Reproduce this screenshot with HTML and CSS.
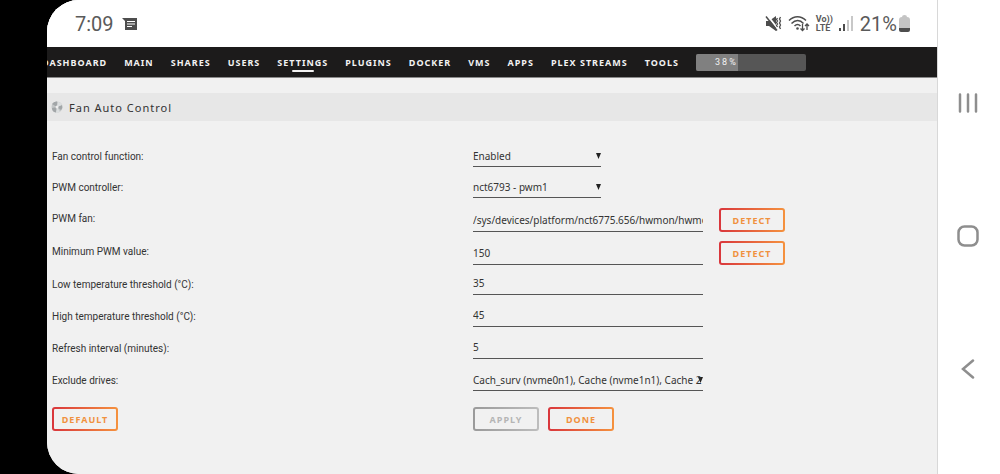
FILE: index.html
```
<!DOCTYPE html>
<html lang="en">
  <head>
    <meta charset="UTF-8" />
    <meta name="viewport" content="width=device-width, initial-scale=1.0" />
    <title>Fan Auto Control</title>
    <link rel="stylesheet" href="styles.css">
  </head>
  <body>
    <div class="screen">
      <div class="page">
        <header class="status">
          <span>7:09</span>
          <svg class="msg" width="16" height="14" viewBox="0 0 16 14">
            <path d="M0 1h15v12H3V4z" fill="#4d4d4d" />
            <path d="M5 4.500h8M5 7h8M5 9.500h5" stroke="#fff" stroke-width="1.200" />
          </svg>
          <div class="status-right">
            <svg width="17" height="17" viewBox="0 0 17 17" fill="none" stroke="#4d4d4d">
              <path d="M1 6h3l7-5v15l-7-5H1z" fill="#4d4d4d" stroke="none" />
              <path d="M2 0l11 14" stroke="#fff" stroke-width="2" />
              <path d="M1 1.500l11 14" stroke-width="1.500" />
              <path d="M12.500 3l-1 1.500 1 1.500-1 1.500 1 1.500-1 1.500 1 1.500M15.500 2l-1 2 1 2-1 2 1 2-1 2 1 2" stroke-width="1.300" />
            </svg>
            <svg width="22" height="17" viewBox="0 0 22 17" fill="none" stroke="#4d4d4d" stroke-width="1.500">
              <path d="M1 5.500c5-5 12-5 17 0M3.500 8.500c4-4 8.500-4 12 0M6.500 11c2-2 4-2 6 0" />
              <circle cx="9.500" cy="13.500" r="1.300" fill="#4d4d4d" stroke="none" />
              <path d="M14.500 9v6.500M12.500 13.500l2 2 2-2M19 15V9M17 11l2-2 2 2" stroke-width="1.300" />
            </svg>
            <span class="volte"><span>Vo))</span><span>LTE</span></span>
            <svg width="15" height="15" viewBox="0 0 15 15">
              <path d="M0 12h2v3H0zM4 8h2v7H4z" fill="#4d4d4d" />
              <path d="M8 4h2v11H8zM12 0h2v15h-2z" fill="#c8c8c8" />
            </svg>
            <span class="percent">21%</span>
            <svg class="battery" width="11" height="17" viewBox="0 0 11 17">
              <path d="M3 2q0-2 2.500-2t2.500 2q3 0 3 3v8H0V5q0-3 3-3z" fill="#c4c4c4" />
              <path d="M0 13h11v2q0 2-2 2H2q-2 0-2-2z" fill="#4d4d4d" />
            </svg>
          </div>
        </header>

        <nav class="menu">
          <a href="#">DASHBOARD</a>
          <a href="#">MAIN</a>
          <a href="#">SHARES</a>
          <a href="#">USERS</a>
          <a href="#" class="active">SETTINGS</a>
          <a href="#">PLUGINS</a>
          <a href="#">DOCKER</a>
          <a href="#">VMS</a>
          <a href="#">APPS</a>
          <a href="#">PLEX STREAMS</a>
          <a href="#">TOOLS</a>
          <div class="usage"><div class="usage-bar" style="width: 38%">38%</div></div>
        </nav>

        <h1 class="title">
          <svg width="12" height="12" viewBox="0 0 12 12">
            <circle cx="6" cy="6" r="5.500" fill="#c3c6c7" />
            <path d="M6 6L1 3q2-3 5-2.500zM6 6l5-2q1 3-1 5zM6 6l-1 5.500Q1 11 1 7z" fill="#a2a6a8" />
            <path d="M6 6l1-5q3 0 4 3zM6 6l3 4.500q-2 1.500-4 1z" fill="#dcdfe0" />
            <circle cx="6" cy="6" r="1.500" fill="#eee" />
          </svg>
          Fan Auto Control
        </h1>

        <form class="settings">
          <div class="row short">
            <label for="service">Fan control function:</label>
            <div class="field">
              <select id="service" class="narrow"><option>Enabled</option><option>Disabled</option></select>
            </div>
          </div>
          <div class="row short">
            <label for="controller">PWM controller:</label>
            <div class="field">
              <select id="controller" class="narrow"><option>nct6793 - pwm1</option></select>
            </div>
          </div>
          <div class="row tall">
            <label for="fan">PWM fan:</label>
            <div class="field">
              <input type="text" id="fan" value="/sys/devices/platform/nct6775.656/hwmon/hwmon3/fan1_input">
              <button type="button">DETECT</button>
            </div>
          </div>
          <div class="row tall">
            <label for="pwm">Minimum PWM value:</label>
            <div class="field">
              <input type="text" id="pwm" value="150">
              <button type="button">DETECT</button>
            </div>
          </div>
          <div class="row">
            <label for="low">Low temperature threshold (°C):</label>
            <div class="field"><input type="text" id="low" value="35"></div>
          </div>
          <div class="row">
            <label for="high">High temperature threshold (°C):</label>
            <div class="field"><input type="text" id="high" value="45"></div>
          </div>
          <div class="row">
            <label for="interval">Refresh interval (minutes):</label>
            <div class="field"><input type="text" id="interval" value="5"></div>
          </div>
          <div class="row">
            <label for="exclude">Exclude drives:</label>
            <div class="field">
              <select id="exclude"><option>Cach_surv (nvme0n1), Cache (nvme1n1), Cache 2</option></select>
            </div>
          </div>
          <div class="row actions">
            <div><button type="button">DEFAULT</button></div>
            <div class="buttons">
              <button type="submit" disabled>APPLY</button>
              <button type="button">DONE</button>
            </div>
          </div>
        </form>
      </div>

      <div class="phone-nav">
        <button type="button" class="key" aria-label="Recents">
          <svg width="20" height="20" viewBox="0 0 20 20" stroke="#8e8e8e" stroke-width="2.500" stroke-linecap="round">
            <path d="M2 1.500v17M10 1.500v17M18 1.500v17" />
          </svg>
        </button>
        <button type="button" class="key" aria-label="Home">
          <svg width="22" height="22" viewBox="0 0 22 22" fill="none" stroke="#8e8e8e" stroke-width="2.500">
            <rect x="1.500" y="1.500" width="19" height="19" rx="6" />
          </svg>
        </button>
        <button type="button" class="key" aria-label="Back">
          <svg width="20" height="20" viewBox="0 0 20 20" fill="none" stroke="#8e8e8e" stroke-width="2.500" stroke-linecap="round">
            <path d="M15 1.500L5 10l10 8.500" />
          </svg>
        </button>
      </div>
    </div>
  </body>
</html>
```
FILE: styles.css
```
* {
  box-sizing: border-box;
}
body {
  margin: 0;
  padding-left: 47px;
  background-color: #000;
  color: #333;
  font-family: "Noto Sans", sans-serif;
  font-size: 10px;
}
.screen {
  display: flex;
  min-height: 100vh;
  background-color: #fff;
  border-radius: 32px 0 0 32px;
  overflow: hidden;
}
.page {
  flex: 1;
  min-width: 0;
  background-color: #f1f1f1;
  border-right: 1px solid #d8d8d8;
}

/* phone status bar */
.status {
  display: flex;
  align-items: center;
  height: 47px;
  padding: 0 27px 0 28px;
  background-color: #fff;
  color: #5a5a5a;
  font-family: Roboto, sans-serif;
  font-size: 20px;
}
.msg {
  margin-left: 8px;
}
.status-right {
  display: flex;
  align-items: center;
  gap: 6px;
  margin-left: auto;
}
.volte {
  display: flex;
  flex-direction: column;
  font-size: 9px;
  font-weight: 700;
  line-height: 9px;
}
.percent {
  margin-right: -4px;
}

/* main menu */
.menu {
  display: flex;
  align-items: center;
  gap: 17px;
  height: 31px;
  background-color: #1c1b1b;
  border-bottom: 1px solid #8a8a8a;
  margin-bottom: 15px;
}
.menu a {
  position: relative;
  color: #f2f2f2;
  font-size: 9px;
  font-weight: 700;
  letter-spacing: 1px;
  text-decoration: none;
  white-space: nowrap;
}
.menu a:first-child {
  margin-left: -5px;
}
.menu .active::after {
  content: "";
  position: absolute;
  left: 28%;
  right: 28%;
  bottom: -3px;
  height: 2px;
  border-radius: 1px;
  background-color: #f2f2f2;
}
.usage {
  width: 110px;
  border-radius: 2px;
  background-color: #565656;
}
.usage-bar {
  height: 17px;
  border-radius: 2px 0 0 2px;
  background-color: #808080;
  color: #f2f2f2;
  font-family: Roboto, sans-serif;
  font-size: 9px;
  line-height: 16px;
  letter-spacing: 2px;
  text-align: right;
}

.title {
  display: flex;
  align-items: center;
  gap: 6px;
  height: 28px;
  margin: 0 0 20px;
  padding-left: 4px;
  background-color: #e7e7e7;
  font-size: 11px;
  font-weight: 400;
  letter-spacing: 1px;
}

/* settings form */
.settings {
  padding: 0 5px;
}
.row {
  display: grid;
  grid-template-columns: 421fr 459fr;
  align-items: start;
  height: 32px;
  padding-top: 2px;
}
.short {
  height: 31px;
}
.tall {
  height: 33px;
  padding-top: 5px;
}
label {
  font-family: Roboto, sans-serif;
  line-height: 28px;
}
.tall label {
  line-height: 22px;
}
.field {
  display: flex;
  gap: 16px;
}
input,
select {
  width: 230px;
  height: 24px;
  padding: 0;
  border: 0;
  border-bottom: 1px solid #555;
  border-radius: 0;
  background-color: transparent;
  color: #333;
  font-family: inherit;
  font-size: 10px;
}
select {
  padding-top: 2px;
  appearance: none;
  background-image: url("data:image/svg+xml,%3Csvg xmlns='http://www.w3.org/2000/svg' width='5' height='6'%3E%3Cpath d='M0 0h5L2.500 6z' fill='%23222'/%3E%3C/svg%3E");
  background-repeat: no-repeat;
  background-position: right 0 top 10px;
}
.narrow {
  width: 128px;
}
button {
  width: 66px;
  height: 24px;
  padding: 0;
  border: 2px solid transparent;
  border-radius: 3px;
  background: linear-gradient(#f1f1f1, #f1f1f1) padding-box,
    linear-gradient(90deg, #d9363c, #f5923e) border-box;
  color: #f0913f;
  font-family: inherit;
  font-size: 9px;
  font-weight: 700;
  letter-spacing: 1px;
}
button:disabled {
  background: linear-gradient(#f1f1f1, #f1f1f1) padding-box,
    linear-gradient(90deg, #9a9a9a, #bdbdbd) border-box;
  color: #b5b5b5;
}
.actions {
  height: auto;
  padding: 10px 0 40px;
}
.buttons {
  display: flex;
  gap: 9px;
}

/* phone navigation keys */
.phone-nav {
  display: flex;
  flex-direction: column;
  align-items: center;
  justify-content: space-between;
  width: 62px;
  padding: 91px 2px 93px 0;
}
.key {
  display: flex;
  align-items: center;
  justify-content: center;
  width: 24px;
  border: 0;
  background: none;
}
```
